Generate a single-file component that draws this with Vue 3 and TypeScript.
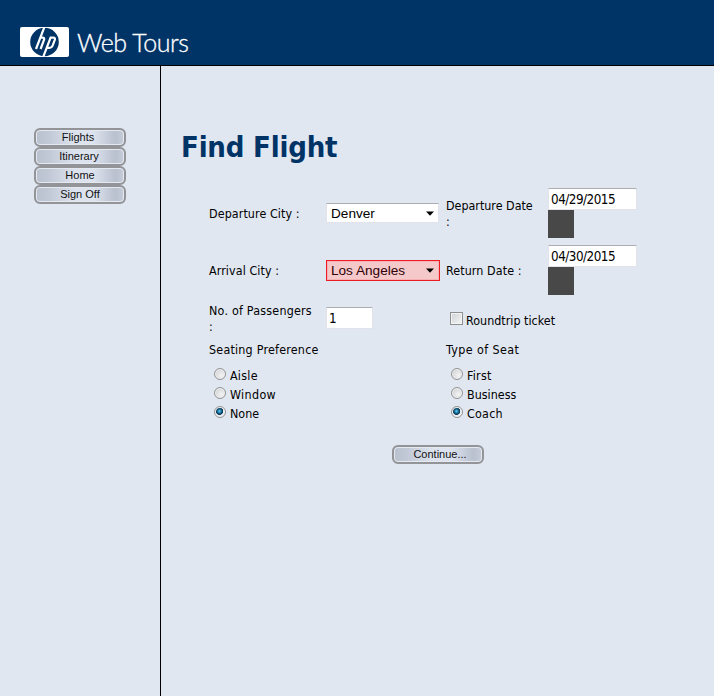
<script setup lang="ts">
import { ref } from 'vue'

const menu: string[] = ['Flights', 'Itinerary', 'Home', 'Sign Off']
const seating: string[] = ['Aisle', 'Window', 'None']
const seatTypes: string[] = ['First', 'Business', 'Coach']

const departDate = ref('04/29/2015')
const returnDate = ref('04/30/2015')
const passengers = ref('1')
const seat = ref('None')
const seatType = ref('Coach')
const roundtrip = ref(false)
</script>

<template>
  <div class="page">
    <header class="banner">
      <svg class="logo" width="49" height="30" viewBox="0 0 49 30">
        <rect width="49" height="30" rx="2" fill="#fff" />
        <ellipse cx="24.5" cy="15" rx="14.3" ry="14.2" fill="#003366" />
        <g fill="none" stroke="#fff" stroke-width="2.2">
          <path d="M24.8 -1 L16 22 M20 10.6 H22.4 Q24.8 10.6 24 13 L20.6 22" />
          <path d="M22.8 31 L30.6 10.6 H33.2 Q35.6 10.6 34.7 13.2 L32.5 18.9 Q31.7 20.9 29.5 20.9 H27.5" />
        </g>
      </svg>
      <span class="brand">Web Tours</span>
    </header>
    <div class="body">
      <nav class="side">
        <button v-for="item in menu" :key="item" class="pill" type="button">{{ item }}</button>
      </nav>
      <main class="main">
        <h1>Find Flight</h1>
        <form class="form" @submit.prevent>
          <div class="row tall">
            <span class="label">Departure City :</span>
            <div class="field">
              <div class="select">Denver<svg width="8" height="5" viewBox="0 0 8 5"><path d="M0 0.4 H8 L4 4.7 Z" /></svg></div>
            </div>
            <span class="label tight">Departure Date<br />:</span>
            <div class="date"><input v-model="departDate" type="text" /><i class="swatch"></i></div>
          </div>
          <div class="row tall">
            <span class="label">Arrival City :</span>
            <div class="field">
              <div class="select marked">Los Angeles<svg width="8" height="5" viewBox="0 0 8 5"><path d="M0 0.4 H8 L4 4.7 Z" /></svg></div>
            </div>
            <span class="label">Return Date :</span>
            <div class="date"><input v-model="returnDate" type="text" /><i class="swatch"></i></div>
          </div>
          <div class="row people">
            <span class="label wide">No. of Passengers<br />:</span>
            <div class="field"><input v-model="passengers" class="count" type="text" /></div>
            <label class="check"><input v-model="roundtrip" type="checkbox" />Roundtrip ticket</label>
          </div>
          <div class="groups">
            <div class="group">
              <span class="title">Seating Preference</span>
              <label v-for="o in seating" :key="o" class="opt" :class="o.toLowerCase()"><input v-model="seat" type="radio" name="seat" :value="o" />{{ o }}</label>
            </div>
            <div class="group">
              <span class="title spaced">Type of Seat</span>
              <label v-for="o in seatTypes" :key="o" class="opt" :class="o.toLowerCase()"><input v-model="seatType" type="radio" name="type" :value="o" />{{ o }}</label>
            </div>
          </div>
          <button class="pill go" type="submit">Continue...</button>
        </form>
      </main>
    </div>
  </div>
</template>

<style>
body { margin: 0; background: #e0e7f1; }
</style>

<style scoped>
* { box-sizing: border-box; }
.page { width: 714px; height: 696px; display: flex; flex-direction: column; overflow: hidden; background: #e0e7f1; color: #000; font: 12.4px/16px "DejaVu Sans Condensed", "DejaVu Sans", sans-serif; }
.banner { height: 66px; flex: none; background: #003366; border-bottom: 1px solid #000; display: flex; padding: 27px 0 0 20px; }
.logo { display: block; flex: none; }
.brand { margin: 0 0 0 8px; color: #fff; font: 300 25px/30px Lato, sans-serif; letter-spacing: -0.45px; -webkit-text-stroke: 0.3px #fff; white-space: nowrap; }
.body { flex: 1; display: flex; }
.side { width: 161px; border-right: 1px solid #000; padding: 62px 0 0 34px; display: flex; flex-direction: column; }
.pill { display: block; width: 92px; height: 19px; flex: none; margin: 0; padding: 0 4px 1px 0; border: 2px solid #929497; border-radius: 6px; box-shadow: inset 0 0 0 1px #e4e9f1; background: linear-gradient(90deg, #b9c0ce, #c2c9d6 15%, #dde3ee 45%, #dde3ee 65%, #b9c0ce 90%, #c6ccd8); font: 11px/14px "Liberation Sans", Arial, sans-serif; color: #111; text-align: center; }
.pill:nth-child(2) { padding-right: 2px; }
.pill:nth-child(n+3) { padding-right: 0; }
.main { flex: 1; padding: 62px 0 0 20px; }
h1 { margin: 0; font: 700 29px/38px "DejaVu Sans Condensed", "DejaVu Sans", sans-serif; letter-spacing: -0.2px; color: #003366; white-space: nowrap; }
.form { padding: 22px 0 0 28px; }
.row { display: grid; grid-template-columns: 117px 120px 102px 90px; align-items: center; }
.tall { height: 50px; margin-bottom: 7px; }
.label { white-space: nowrap; letter-spacing: 0.09px; padding-top: 2px; }
.label.tight { letter-spacing: 0; }
.label.wide { letter-spacing: 0.22px; padding-top: 0; }
.select { width: 113px; height: 20px; border: 1px solid #e2e3ea; border-top-color: #abadb3; background: #fff; border-radius: 1px; display: flex; align-items: center; justify-content: space-between; padding: 1px 4px 0; font: 13.6px/18px "Liberation Sans", Arial, sans-serif; white-space: nowrap; }
.marked { width: 114px; height: 21px; margin: 1px 0 0; border: 1px solid #ed1c24; background: #f5c9ca; padding: 0 5px 0 4px; color: #300006; box-shadow: inset 0 0 0 1px #f6b1b4; border-radius: 0; }
.date { display: flex; flex-direction: column; }
input[type="text"] { width: 89px; height: 22px; margin: 0; padding: 1px 2px 0; border: 1px solid #e2e3ea; border-top-color: #abadb3; border-radius: 1px; background: #fff; color: #000; font: 13.33px/18px "DejaVu Sans Condensed", sans-serif; letter-spacing: -0.5px; outline: none; }
.swatch { width: 26px; height: 28px; background: #484848; }
input.count[type="text"] { display: block; width: 47px; padding-top: 0; }
.people { height: 32px; margin-top: 8px; grid-template-columns: 117px 120px 192px; }
.people .field { margin-top: -2px; }
.check { display: flex; align-items: center; padding: 3px 0 0 4px; white-space: nowrap; letter-spacing: 0.02px; }
input[type="checkbox"] { appearance: none; width: 13px; height: 13px; margin: -4px 3px 0 0; border: 1px solid #8e8f8f; background: linear-gradient(135deg, #cfd2d7, #f5f5f5); box-shadow: inset 0 0 0 1px #f4f4f4; }
.groups { display: grid; grid-template-columns: 237px 190px; margin-top: 7px; }
.group { display: flex; flex-direction: column; }
.title { height: 24px; letter-spacing: 0.22px; }
.title.spaced { letter-spacing: 0.42px; }
.opt { display: flex; align-items: center; height: 19px; padding-left: 5px; letter-spacing: 0.25px; }
.none, .business { letter-spacing: 0.03px; }
.window { letter-spacing: 0.35px; }
input[type="radio"] { appearance: none; width: 12px; height: 12px; margin: -3px 4px 0 0; border: 1px solid #929394; border-radius: 50%; background: radial-gradient(circle at 65% 65%, #f3f3f3, #c8cacd); box-shadow: inset 0 0 0 1px #f2f2f2; }
input[type="radio"]:checked { background: radial-gradient(circle at 45% 42%, #72cdee 0, #1878a5 22%, #082d4b 42%, #e9edf0 50%); }
.pill.go { margin: 22px 0 0 183px; padding: 0 0 1px 4px; }
</style>
